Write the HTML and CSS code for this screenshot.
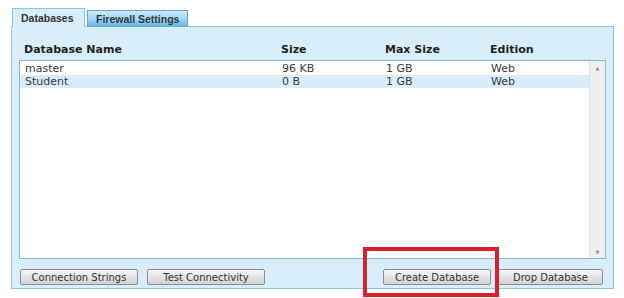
FILE: index.html
```html
<!DOCTYPE html>
<html>
<head>
    <title>Databases</title>
    <link rel="stylesheet" href="styles.css">
</head>
<body>
    <div class="page">
        <div class="tabs">
            <div class="tab active">Databases</div>
            <div class="tab">Firewall Settings</div>
        </div>
        <div class="panel">
            <div class="cols head">
                <span>Database Name</span>
                <span>Size</span>
                <span>Max Size</span>
                <span>Edition</span>
            </div>
            <div class="list">
                <div class="rows">
                    <div class="cols row">
                        <span>master</span>
                        <span>96 KB</span>
                        <span>1 GB</span>
                        <span>Web</span>
                    </div>
                    <div class="cols row selected">
                        <span>Student</span>
                        <span>0 B</span>
                        <span>1 GB</span>
                        <span>Web</span>
                    </div>
                </div>
                <div class="scrollbar">
                    <span class="arrow">&#9650;</span>
                    <span class="arrow">&#9660;</span>
                </div>
            </div>
            <div class="buttons">
                <div class="group">
                    <button class="wide">Connection Strings</button>
                    <button class="wide">Test Connectivity</button>
                </div>
                <div class="group right">
                    <button class="create">Create Database</button>
                    <button class="drop">Drop Database</button>
                </div>
            </div>
        </div>
    </div>
    <div class="highlight"></div>
</body>
</html>
```

FILE: styles.css
```css
* {
    box-sizing: border-box;
}

body {
    margin: 0;
    background-color: #ffffff;
    font-family: "DejaVu Sans", Verdana, sans-serif;
    font-size: 11px;
    color: #333333;
}

.page {
    padding: 8px 0 0 11px;
}

.tabs {
    display: flex;
    align-items: flex-end;
    gap: 2px;
    padding-left: 1px;
    position: relative;
    z-index: 1;
    height: 19px;
    margin-bottom: -1px;
}

.tab {
    font-family: "Liberation Sans", Arial, sans-serif;
    font-weight: bold;
    font-size: 10.5px;
    color: #2a3a44;
    height: 17px;
    line-height: 16px;
    padding: 0 8px;
    border: 1px solid #5fa9cf;
    border-bottom: none;
    background: linear-gradient(#cdeaf8, #9fd3ee 55%, #5ab2de);
}

.tab.active {
    height: 19px;
    line-height: 18px;
    width: 73px;
    border-color: #8fc4dc;
    background: #d8effb;
    color: #333333;
}

.panel {
    width: 603px;
    height: 263px;
    padding: 9px 7px 3px 7px;
    border: 1px solid #8fc4dc;
    background-color: #d8effb;
    display: flex;
    flex-direction: column;
}

.cols {
    display: grid;
    grid-template-columns: 257px 104px 105px 1fr;
    padding-left: 5px;
}

.head {
    font-weight: bold;
    font-size: 11px;
    color: #222222;
    height: 24px;
    line-height: 28px;
}

.list {
    height: 199px;
    border: 1px solid #85b8d0;
    background-color: #ffffff;
    display: flex;
}

.rows {
    flex: 1;
    padding-top: 1px;
}

.row {
    height: 13px;
    line-height: 13px;
    color: #3a3a3a;
}

.row.selected {
    background-color: #d9ecf9;
}

.scrollbar {
    width: 16px;
    background-color: #efefef;
    border-left: 1px solid #e0e0e0;
    display: flex;
    flex-direction: column;
    justify-content: space-between;
    align-items: center;
    padding: 4px 0 3px;
}

.arrow {
    font-size: 5px;
    color: #8a8a8a;
}

.buttons {
    display: flex;
    justify-content: space-between;
    padding-top: 10px;
    padding-left: 1px;
    padding-right: 3px;
}

.group {
    display: flex;
    gap: 9px;
}

.group.right {
    gap: 7px;
}

button {
    font-family: "DejaVu Sans", Verdana, sans-serif;
    font-size: 10px;
    color: #333333;
    height: 16px;
    padding: 0;
    border: 1px solid #8c8c8c;
    border-radius: 2px;
    background: linear-gradient(#f8f8f8, #e4e4e4 50%, #d2d2d2);
}

.wide {
    width: 118px;
}

.create {
    width: 108px;
}

.drop {
    width: 105px;
}

.highlight {
    position: absolute;
    left: 363px;
    top: 247px;
    width: 136px;
    height: 50px;
    border: 4px solid #d9202c;
}
```
